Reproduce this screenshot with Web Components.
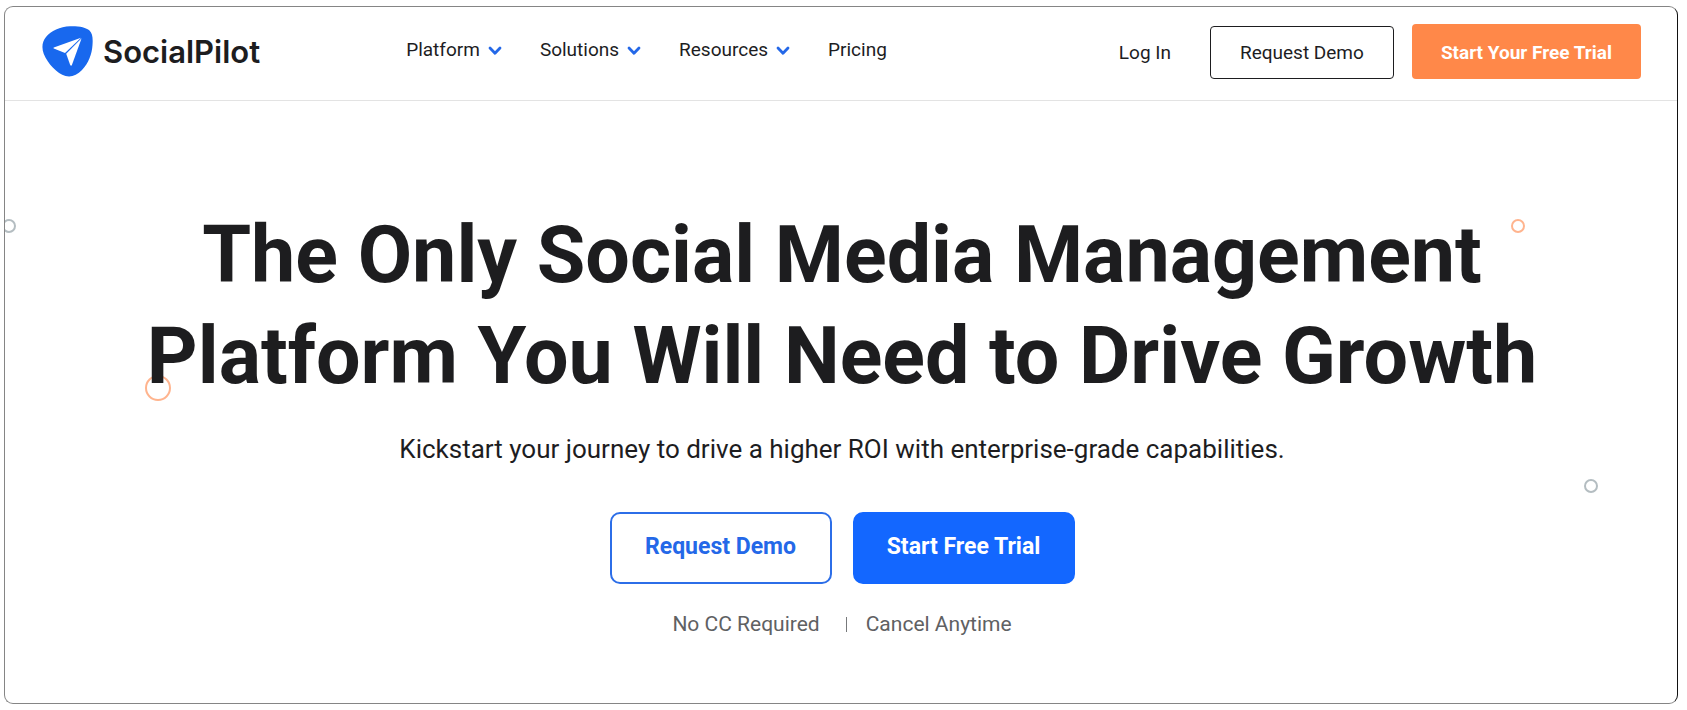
<!DOCTYPE html>
<html lang="en">
<head>
<meta charset="utf-8">
<title>SocialPilot</title>
<style>
  body { margin: 0; background: #fff; font-family: Roboto, sans-serif; color: #1d1d1f; }
</style>
</head>
<body>
<sp-page></sp-page>

<script>
const define = (name, html) => {
  const template = document.createElement('template');
  template.innerHTML = html;
  customElements.define(name, class extends HTMLElement {
    constructor() {
      super();
      this.attachShadow({ mode: 'open' }).append(template.content.cloneNode(true));
    }
  });
};

define('sp-logo', `
  <style>
    :host { display: block; }
    a { display: flex; align-items: center; gap: 10px; color: #1d1d1f; text-decoration: none;
        font: 600 31px/40px Inter, sans-serif; }
    svg { display: block; }
  </style>
  <a href="#">
    <svg width="51" height="51" viewBox="0 0 51 51" aria-hidden="true">
      <path fill="#1868ee" d="M28 0.3C37 0 44 1.500 47.500 4.500C50.500 7.500 51 12 50.500 19C50 28 46.500 37 40 44C35 49.500 29 51.500 23.500 50C15 47.500 6 38 1.800 28C-0.500 22 0 16 4 11C9 5 18 0.800 28 0.300Z"/>
      <path fill="#fff" d="M39 11.800L11.800 21.500Q11 22 11.800 22.500L23 27Z"/>
      <path fill="#fff" d="M39.600 12.200L24.200 27.800L28.200 39Q29.200 40.500 30 38.800Z"/>
    </svg>
    <span>SocialPilot</span>
  </a>`);

define('sp-nav-item', `
  <style>
    :host { display: block; }
    a { display: flex; align-items: center; gap: 8px; color: inherit; text-decoration: none; }
    svg { display: none; margin-top: 2px; }
    :host([menu]) svg { display: block; }
  </style>
  <a href="#"><slot></slot>
    <svg width="14" height="10" viewBox="0 0 14 10" aria-hidden="true">
      <path d="M2 2L7 7.200L12 2" fill="none" stroke="#2468e8" stroke-width="2.800" stroke-linecap="round" stroke-linejoin="round"/>
    </svg>
  </a>`);

define('sp-button', `
  <style>
    :host { display: block; }
    button { display: block; box-sizing: border-box; height: 53px; padding: 0 29px; margin: 0; cursor: pointer;
      font: 400 19px/24px Roboto, sans-serif; color: #1d1d1f; background: #fff;
      border: 1px solid #1d1d1f; border-radius: 4px; white-space: nowrap; }
    :host([variant="orange"]) button { height: 55px; padding: 2px 29px 0; font-weight: 700;
      color: #fff; background: #ff8849; border: 0; }
    :host([size="large"]) button { height: 72px; min-width: 222px; padding: 0 32px 2px; border-radius: 10px;
      font-size: 23px; font-weight: 700; line-height: 28px; color: #2468e8; border: 2px solid #2c6ee8; }
    :host([variant="blue"]) button { color: #fff; background: #1367ff; border-color: #1367ff; }
    :host([size="large"][variant="blue"]) button { color: #fff; border-color: #1367ff; }
  </style>
  <button type="button"><slot></slot></button>`);

define('sp-header', `
  <style>
    :host { display: flex; align-items: center; padding: 17px 36px 21px 37px; border-bottom: 1px solid #e3e3e3;
      font-size: 19px; line-height: 24px; }
    nav { display: flex; gap: 38px; margin-left: 146px; padding-bottom: 4px; }
    .actions { display: flex; align-items: flex-end; margin-left: auto; }
    .login { margin-right: 39px; line-height: 53px; color: inherit; text-decoration: none; }
    .actions sp-button + sp-button { margin-left: 18px; }
  </style>
  <sp-logo></sp-logo>
  <nav>
    <sp-nav-item menu>Platform</sp-nav-item>
    <sp-nav-item menu>Solutions</sp-nav-item>
    <sp-nav-item menu>Resources</sp-nav-item>
    <sp-nav-item>Pricing</sp-nav-item>
  </nav>
  <div class="actions">
    <a class="login" href="#">Log In</a>
    <sp-button>Request Demo</sp-button>
    <sp-button variant="orange">Start Your Free Trial</sp-button>
  </div>`);

define('sp-rings', `
  <style>
    :host { position: absolute; inset: 0; overflow: hidden; pointer-events: none; }
    i { position: absolute; box-sizing: border-box; width: 14px; height: 14px;
        border: 2px solid #b4bdc1; border-radius: 50%; }
    .orange { border-color: #ffb48e; }
    .a { left: -3px; top: 118px; }
    .b { right: 152px; top: 118px; }
    .c { left: 140px; top: 274px; width: 26px; height: 26px; }
    .d { right: 79px; top: 378px; }
  </style>
  <i class="a"></i><i class="orange b"></i><i class="orange c"></i><i class="d"></i>`);

define('sp-hero', `
  <style>
    :host { display: block; position: relative; padding: 104px 100px 65px 102px; text-align: center; }
    h1, p, .cta { position: relative; margin: 0; }
    h1 { font-size: 79px; line-height: 101px; font-weight: 700; }
    .lead { margin-top: 24px; font-size: 26px; line-height: 36px; }
    .cta { display: flex; justify-content: center; gap: 21px; margin-top: 45px; }
    .notes { display: flex; justify-content: center; align-items: center; margin-top: 26px;
      font-size: 21px; line-height: 28px; color: #5f6163; }
    .notes i { width: 1px; height: 15px; margin: 0 19px 0 26px; background: #77797b; }
  </style>
  <sp-rings></sp-rings>
  <h1>The Only Social Media Management<br>Platform You Will Need to Drive Growth</h1>
  <p class="lead">Kickstart your journey to drive a higher ROI with enterprise-grade capabilities.</p>
  <div class="cta">
    <sp-button size="large">Request Demo</sp-button>
    <sp-button size="large" variant="blue">Start Free Trial</sp-button>
  </div>
  <p class="notes"><span>No CC Required</span><i></i><span>Cancel Anytime</span></p>`);

define('sp-page', `
  <style>
    :host { display: block; padding: 6px 9px 6px 4px; }
    .frame { overflow: hidden; border: 1px solid #858585; border-right-color: #111; border-radius: 9px; }
  </style>
  <div class="frame">
    <sp-header></sp-header>
    <sp-hero></sp-hero>
  </div>`);
</script>
</body>
</html>
